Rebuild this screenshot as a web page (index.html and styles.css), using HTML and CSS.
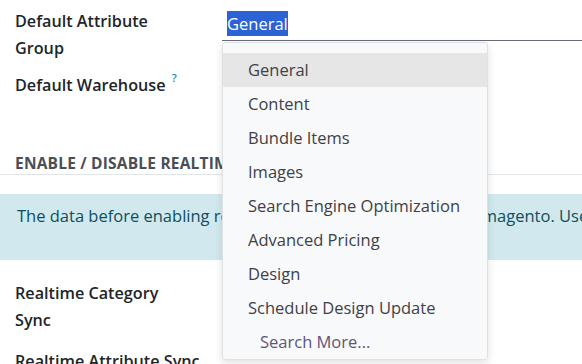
FILE: index.html
```html
<!DOCTYPE html>
<html lang="en">
<head>
    <meta charset="UTF-8">
    <title>Magento Settings</title>
    <link rel="stylesheet" href="styles.css">
</head>
<body>

    <div class="sheet">
        <div class="field-row first">
            <label class="field-label">Default Attribute Group</label>
            <div class="field-value">
                <div class="m2o-input">
                    <span class="selected-text">General</span>
                </div>
                <ul class="m2o-dropdown">
                    <li class="active">General</li>
                    <li>Content</li>
                    <li>Bundle Items</li>
                    <li>Images</li>
                    <li>Search Engine Optimization</li>
                    <li>Advanced Pricing</li>
                    <li>Design</li>
                    <li>Schedule Design Update</li>
                    <li class="search-more">Search More...</li>
                </ul>
            </div>
        </div>

        <div class="field-row warehouse">
            <label class="field-label">Default Warehouse <sup class="help">?</sup></label>
            <div class="field-value"></div>
        </div>

        <div class="section-title">Enable / Disable Realtime Sync</div>

        <div class="alert-info">
            The data before enabling realtime sync will not be synced to magento. Use the manual export for that.
        </div>

        <div class="field-row category">
            <label class="field-label">Realtime Category Sync</label>
            <div class="field-value"></div>
        </div>

        <div class="field-row attribute">
            <label class="field-label">Realtime Attribute Sync</label>
            <div class="field-value"></div>
        </div>
    </div>

</body>
</html>
```

FILE: styles.css
```css
html, body {
    margin: 0;
    padding: 0;
    background: #ffffff;
    overflow: hidden;
}

body {
    font-family: "Open Sans", "Noto Sans", sans-serif;
    font-size: 16.5px;
    color: #212529;
}

.sheet {
    width: 900px;
    padding-top: 8px;
}

.field-row {
    display: grid;
    grid-template-columns: 207px 1fr;
    padding-left: 15px;
    margin-bottom: 10px;
}

.field-label {
    font-size: 16.2px;
    font-weight: 600;
    line-height: 27px;
    width: 165px;
}

.warehouse .field-label,
.attribute .field-label {
    width: auto;
    white-space: nowrap;
}

.field-label .help {
    color: #1f86b0;
    font-size: 11px;
    font-weight: 600;
    margin-left: 2px;
    vertical-align: 9px;
    line-height: 0;
}

.field-value {
    position: relative;
}

.m2o-input {
    height: 33px;
    border-bottom: 1px solid #6b6a7a;
    padding: 3px 0 0 5px;
    box-sizing: border-box;
}

.selected-text {
    display: inline-block;
    background: #2b62d4;
    color: #ffffff;
    line-height: 25px;
}

.m2o-dropdown {
    position: absolute;
    top: 34px;
    left: 0;
    width: 264px;
    margin: 0;
    padding: 10px 0 0;
    list-style: none;
    background: #f8f9fa;
    border: 1px solid #dee2e6;
    border-radius: 3px;
    box-shadow: 0 3px 8px rgba(0, 0, 0, 0.12);
    z-index: 10;
}

.m2o-dropdown li {
    padding-left: 25px;
    line-height: 34px;
    color: #3e4146;
}

.m2o-dropdown li.active {
    background: #e6e6e6;
}

.m2o-dropdown li.search-more {
    padding-left: 37px;
    color: #5d5676;
}

.warehouse {
    height: 70px;
}

.section-title {
    margin-top: 10px;
    padding: 0 15px;
    font-size: 15.5px;
    font-weight: 700;
    text-transform: uppercase;
    color: #4a4f55;
    letter-spacing: 0.2px;
    white-space: nowrap;
    border-bottom: 1px solid #e2e5e8;
}

.alert-info {
    margin-top: 19px;
    height: 66px;
    box-sizing: border-box;
    padding: 10px 17px;
    background: #d1e9ee;
    color: #0e4f5c;
    white-space: nowrap;
}

.category {
    margin-top: 20px;
    margin-bottom: 14px;
}
```
